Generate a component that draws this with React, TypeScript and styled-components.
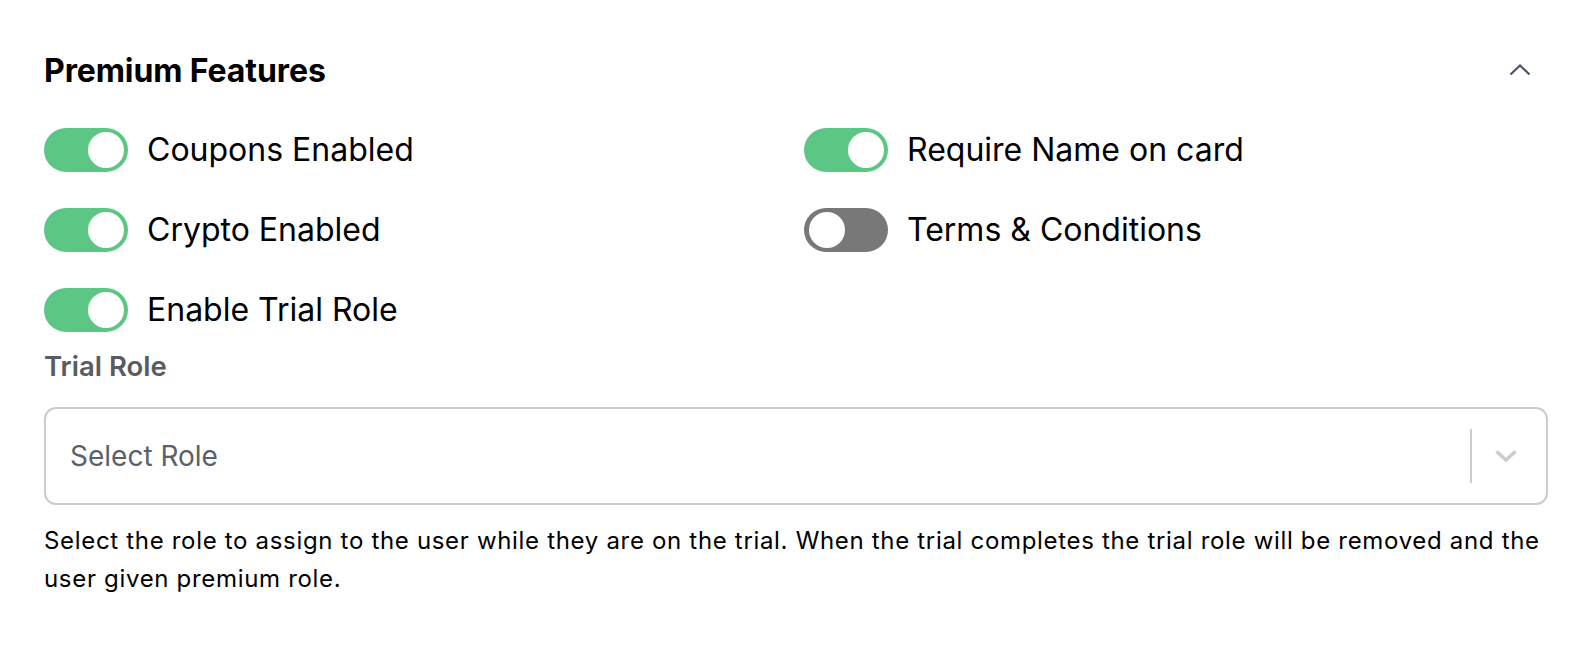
import React, { useState } from 'react'
import styled, { createGlobalStyle } from 'styled-components'

const GlobalStyle = createGlobalStyle`
    * {
        box-sizing: border-box;
    }

    body {
        margin: 0;
        background: #ffffff;
        font-family: Inter, 'Noto Sans', 'Liberation Sans', sans-serif;
        color: #000000;
    }
`

const StyledPanel = styled.section`
    padding: 50px 44px 40px;
    display: flex;
    flex-direction: column;
`

const StyledHeader = styled.header`
    display: flex;
    align-items: center;
    justify-content: space-between;
    height: 40px;
`

const StyledTitle = styled.h2`
    margin: 0;
    font-size: 32px;
    font-weight: 700;
    letter-spacing: -0.1px;
`

const StyledCollapseButton = styled.button`
    display: flex;
    align-items: center;
    justify-content: center;
    width: 40px;
    height: 40px;
    margin-right: 8px;
    padding: 0;
    border: none;
    background: none;
    color: #4b5563;
    cursor: pointer;
`

const StyledToggleGrid = styled.div`
    display: grid;
    grid-template-columns: 1fr 1fr;
    column-gap: 16px;
    row-gap: 36px;
    margin-top: 38px;
`

const StyledToggleRow = styled.label`
    display: flex;
    align-items: center;
    gap: 19px;
    font-size: 32px;
    line-height: 44px;
    cursor: pointer;
`

const StyledTrack = styled.span<{ $on: boolean }>`
    position: relative;
    flex-shrink: 0;
    width: 84px;
    height: 44px;
    border-radius: 22px;
    background-color: ${({ $on }) => ($on ? '#5cc785' : '#787878')};
    transition: background-color 0.2s;
`

const StyledKnob = styled.span<{ $on: boolean }>`
    position: absolute;
    top: 4px;
    left: ${({ $on }) => ($on ? '44px' : '5px')};
    width: 36px;
    height: 36px;
    border-radius: 50%;
    background-color: #ffffff;
    transition: left 0.2s;
`

const StyledField = styled.div`
    display: flex;
    flex-direction: column;
    margin-top: 18px;
`

const StyledFieldLabel = styled.div`
    font-size: 27.5px;
    font-weight: 600;
    color: #575c64;
    line-height: 32px;
`

const StyledSelect = styled.div`
    display: flex;
    align-items: center;
    height: 98px;
    margin-top: 25px;
    border: 2px solid #cccccc;
    border-radius: 12px;
    background: #ffffff;
`

const StyledPlaceholder = styled.span`
    flex: 1;
    padding-left: 24px;
    font-size: 28px;
    color: #5b616b;
`

const StyledSeparator = styled.span`
    align-self: stretch;
    width: 2px;
    margin: 20px 0;
    background-color: #cccccc;
`

const StyledIndicator = styled.span`
    display: flex;
    align-items: center;
    justify-content: center;
    width: 74px;
    padding-right: 6px;
    color: #cccccc;
`

const StyledHelp = styled.p`
    margin: 17px 0 0;
    font-size: 24px;
    line-height: 38px;
    letter-spacing: 0.68px;
    color: #000000;
`

type ToggleProps = { label: string; defaultOn: boolean }

const Toggle: React.FC<ToggleProps> = ({ label, defaultOn }) => {
    const [on, setOn] = useState(defaultOn)

    return (
        <StyledToggleRow onClick={() => setOn(!on)}>
            <StyledTrack $on={on}>
                <StyledKnob $on={on} />
            </StyledTrack>
            {label}
        </StyledToggleRow>
    )
}

export default function App() {
    const toggles = [
        { label: 'Coupons Enabled', on: true },
        { label: 'Require Name on card', on: true },
        { label: 'Crypto Enabled', on: true },
        { label: 'Terms & Conditions', on: false },
        { label: 'Enable Trial Role', on: true },
    ]

    return (
        <>
            <GlobalStyle />
            <StyledPanel>
                <StyledHeader>
                    <StyledTitle>Premium Features</StyledTitle>
                    <StyledCollapseButton aria-label="Collapse">
                        <svg width="22" height="12" viewBox="0 0 22 12" fill="none">
                            <path d="M1.5 10.5L11 1.5L20.5 10.5" stroke="currentColor" strokeWidth="2.2" />
                        </svg>
                    </StyledCollapseButton>
                </StyledHeader>
                <StyledToggleGrid>
                    {toggles.map(({ label, on }) => (
                        <Toggle key={label} label={label} defaultOn={on} />
                    ))}
                </StyledToggleGrid>
                <StyledField>
                    <StyledFieldLabel>Trial Role</StyledFieldLabel>
                    <StyledSelect>
                        <StyledPlaceholder>Select Role</StyledPlaceholder>
                        <StyledSeparator />
                        <StyledIndicator>
                            <svg width="24" height="14" viewBox="0 0 24 14" fill="none">
                                <path d="M2.5 2.5L12 11L21.5 2.5" stroke="currentColor" strokeWidth="3.5" />
                            </svg>
                        </StyledIndicator>
                    </StyledSelect>
                </StyledField>
                <StyledHelp>
                    Select the role to assign to the user while they are on the trial. When the trial completes the
                    trial role will be removed and the user given premium role.
                </StyledHelp>
            </StyledPanel>
        </>
    )
}
